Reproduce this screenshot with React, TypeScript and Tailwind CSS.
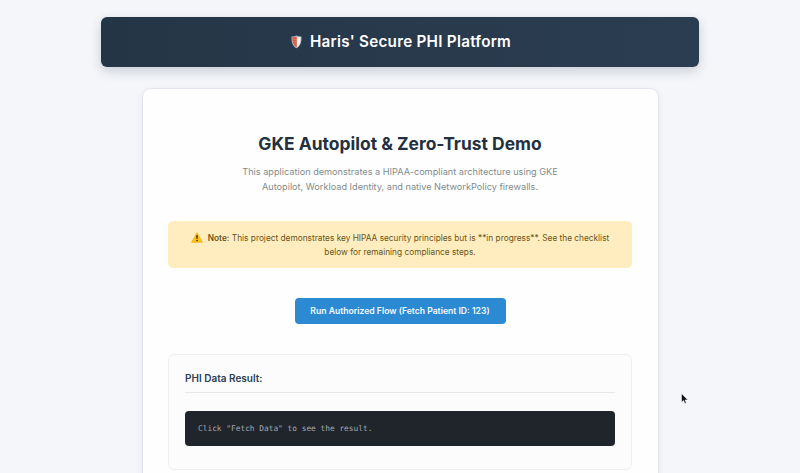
function ShieldIcon() {
  return (
    <svg viewBox="0 0 12 14" className="mr-[8px] h-[14px] w-[11px] shrink-0" aria-hidden="true">
      <path d="M6 0C4.300.8 2.400 1 .6.9c-.4 5.700 1 10.200 5.400 13 4.400-2.800 5.800-7.300 5.400-13C9.600 1 7.700.8 6 0Z" fill="#aebcc4" />
      <path d="M6.400.9C4.700 1.600 2.900 1.800 1.400 1.700c-.2 5 1.200 8.700 5 11.300Z" fill="#e2583c" />
      <path d="M6.400.9c1.400.7 2.900.9 4.200.8.2 5-1 8.700-4.200 11.300Z" fill="#f1f3f2" />
      <path d="M2.400 4.200h3M2.600 6.600h3M3.500 9h2" stroke="#c4917f" strokeWidth=".6" />
    </svg>
  );
}

function WarningIcon() {
  return (
    <svg viewBox="0 0 12 11" className="mr-[5px] inline-block h-[11px] w-[12px] align-[-2px]" aria-hidden="true">
      <path d="M6 .8 11.300 10.200H.7Z" fill="#fcc21b" stroke="#f5b51a" strokeWidth="1" strokeLinejoin="round" />
      <path d="M5.100 3.200h1.800l-.4 3.900h-1Z" fill="#38332b" />
      <circle cx="6" cy="8.600" r=".8" fill="#38332b" />
    </svg>
  );
}

function Pointer() {
  return (
    <svg viewBox="0 0 8 12" className="absolute left-[681px] top-[393px] h-[12px] w-[8px]" aria-hidden="true">
      <path d="M.5.5v8.700l2-1.800 1.400 3.200 1.400-.6-1.300-3.100h2.800Z" fill="#111" stroke="#fff" strokeWidth=".5" />
    </svg>
  );
}

export default function App() {
  return (
    <div className="relative flex h-[473px] w-[800px] flex-col items-center overflow-hidden bg-[#f4f6fa] pt-[17px] font-['Inter',sans-serif]">
      <header className="flex h-[50px] w-[598px] shrink-0 items-center justify-center rounded-[6px] bg-linear-to-r from-[#243646] to-[#2b3d51] pl-[2px] shadow-[0_4px_12px_rgba(30,40,70,0.2)]">
        <ShieldIcon />
        <h1 className="whitespace-nowrap pt-[1px] text-[15.250px] font-semibold tracking-[0.250px] text-white">Haris' Secure PHI Platform</h1>
      </header>

      <main className="mt-[22px] flex h-[420px] w-[515px] shrink-0 flex-col items-center rounded-t-[8px] bg-[#fefefe] px-[25px] pt-[42px] shadow-[0_0_0_1px_rgba(30,40,70,0.05),0_2px_8px_rgba(30,40,70,0.08)]">
        <h2 className="whitespace-nowrap text-[17.450px] font-bold leading-[26px] text-[#23303e]">GKE Autopilot &amp; Zero-Trust Demo</h2>
        <p className="mt-[7px] whitespace-nowrap text-center text-[9.170px] leading-[15px] text-[#7f8c8d]">
          This application demonstrates a HIPAA-compliant architecture using GKE
          <br />
          Autopilot, Workload Identity, and native NetworkPolicy firewalls.
        </p>

        <div className="mt-[27px] h-[47px] w-[464px] shrink-0 whitespace-nowrap rounded-[5px] bg-[#ffedc0] pt-[10px] text-center text-[8.300px] leading-[14px] text-[#6b5415]">
          <WarningIcon />
          <strong className="font-semibold">Note:</strong> This project demonstrates key HIPAA security principles but is **in progress**. See the checklist
          <br />
          below for remaining compliance steps.
        </div>

        <button className="mt-[30px] h-[26px] w-[211px] shrink-0 whitespace-nowrap rounded-[4px] bg-[#2c8ad2] text-[8.620px] font-semibold text-[#f4faff]">
          Run Authorized Flow (Fetch Patient ID: 123)
        </button>

        <section className="mt-[30px] h-[116px] w-[464px] shrink-0 rounded-[6px] border border-[#eeeff0] bg-[#fcfcfc] px-[16px] pt-[16px]">
          <h3 className="h-[22px] border-b border-[#e6e8e9] text-[10px] font-semibold leading-[15px] text-[#2c3e50]">PHI Data Result:</h3>
          <pre className="mt-[18px] h-[35px] rounded-[4px] bg-[#20252c] px-[13px] font-['DejaVu_Sans_Mono',monospace] text-[7.830px] leading-[35px] text-[#a5abb1]">Click "Fetch Data" to see the result.</pre>
        </section>
      </main>
      <Pointer />
    </div>
  );
}
